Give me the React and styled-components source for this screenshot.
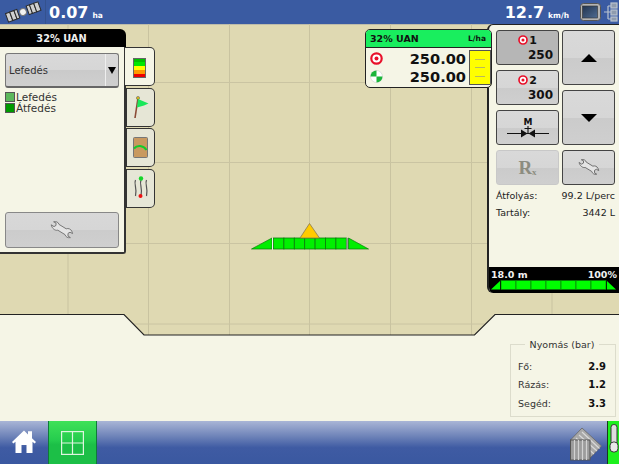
import React from "react";
import styled, { createGlobalStyle } from "styled-components";

const GlobalStyle = createGlobalStyle`
  html, body {
    margin: 0;
    padding: 0;
    overflow: hidden;
    background: #f5f5e6;
  }
  * {
    box-sizing: border-box;
  }
`;

const Screen = styled.div`
  width: 619px;
  height: 464px;
  display: flex;
  flex-direction: column;
  overflow: hidden;
  font-family: "DejaVu Sans", sans-serif;
  color: #222;
  background: #f5f5e6;
`;

const TopBar = styled.header`
  height: 24px;
  flex: none;
  display: flex;
  align-items: center;
  background: #3a5ba2;
  color: #fff;
`;

const GpsCell = styled.div`
  width: 46px;
  height: 24px;
  padding-left: 4px;
  display: flex;
  align-items: center;
  border-right: 1px solid #34528f;
`;

const Reading = styled.div`
  display: flex;
  align-items: baseline;
  gap: 4px;
  margin-left: ${(props) => props.$left || 0}px;
  margin-right: ${(props) => props.$right || 0}px;
  font-size: 16px;
  font-weight: 700;
  white-space: nowrap;
`;

const Unit = styled.span`
  font-size: 7.5px;
  font-weight: 700;
`;

const StatusIcons = styled.div`
  margin-left: auto;
  padding-right: 1px;
  display: flex;
  align-items: center;
  gap: 2px;
`;

const Main = styled.main`
  position: relative;
  flex: 1;
`;

const FieldMap = styled.svg`
  position: absolute;
  top: 0;
  left: 0;
  display: block;
`;

const LeftPanel = styled.section`
  position: absolute;
  top: 5px;
  left: 0;
  width: 155px;
`;

const PanelTitle = styled.div`
  width: 126px;
  height: 18px;
  padding-right: 3px;
  background: #000;
  border-radius: 0 6px 0 0;
  color: #f0f0f0;
  font-size: 9.8px;
  font-weight: 700;
  text-align: center;
  line-height: 19px;
`;

const PanelRow = styled.div`
  display: flex;
  align-items: flex-start;
`;

const PanelBody = styled.div`
  width: 126px;
  height: 207px;
  padding: 6px 6px 4px 5px;
  display: flex;
  flex-direction: column;
  background: #f5f5e6;
  border-right: 2px solid #333;
  border-bottom: 2px solid #333;
  border-radius: 0 0 3px 0;
`;

const Dropdown = styled.div`
  height: 35px;
  width: 114px;
  display: flex;
  align-items: center;
  background: linear-gradient(#d9d9d9 0%, #d6d6d6 50%, #cacaca 51%, #cfcfcf 100%);
  border: 1px solid #777;
  border-bottom: 2px solid #666;
  border-radius: 3px;
  font-size: 10px;
  color: #333;
`;

const DropdownLabel = styled.span`
  flex: 1;
  padding-left: 3px;
`;

const DropdownArrow = styled.span`
  width: 13px;
  height: 100%;
  display: flex;
  align-items: center;
  justify-content: center;
  border-left: 1px solid #eee;
  &::after {
    content: "";
    border-left: 4px solid transparent;
    border-right: 4px solid transparent;
    border-top: 7px solid #000;
  }
`;

const Legend = styled.div`
  margin-top: 4px;
  display: flex;
  flex-direction: column;
  gap: 1px;
`;

const LegendRow = styled.div`
  display: flex;
  align-items: center;
  gap: 1px;
  height: 10px;
  font-size: 10.5px;
  color: #333;
`;

const Swatch = styled.span`
  width: 10px;
  height: 10px;
  background: ${(props) => props.$color};
  border: 1px solid #555;
`;

const WrenchWide = styled.button`
  margin-top: auto;
  width: 114px;
  height: 36px;
  padding: 0;
  display: flex;
  align-items: center;
  justify-content: center;
  background: linear-gradient(#d8d8d8 0%, #d6d6d6 50%, #cccccc 51%, #cfcfcf 100%);
  border: 1px solid #888;
  border-radius: 3px;
`;

const TabColumn = styled.div`
  width: 30px;
  display: flex;
  flex-direction: column;
  gap: 1.5px;
  margin-left: -1px;
  position: relative;
`;

const Tab = styled.div`
  width: 30px;
  height: 39px;
  display: flex;
  align-items: center;
  justify-content: center;
  background: ${(props) => (props.$active ? "#f5f5e6" : "#e6e6d6")};
  border: 1px solid #333;
  border-left: ${(props) => (props.$active ? "none" : "2px solid #333")};
  border-radius: 0 5px 5px 0;
`;

const RatePanel = styled.section`
  position: absolute;
  top: 5px;
  left: 365px;
  width: 127px;
  height: 59px;
  display: flex;
  flex-direction: column;
  background: #f5f5e6;
  border: 1px solid #222;
  border-radius: 5px;
  overflow: hidden;
`;

const RateHeader = styled.div`
  height: 18px;
  flex: none;
  padding: 0 5px 0 4px;
  display: flex;
  align-items: center;
  justify-content: space-between;
  background: #19ee5e;
  border-bottom: 1px solid #222;
  font-size: 9.5px;
  font-weight: 700;
  color: #111;
`;

const RateSmall = styled.span`
  font-size: 7.5px;
`;

const RateBody = styled.div`
  flex: 1;
  display: flex;
`;

const RateValues = styled.div`
  width: 103px;
  padding: 2px 3px 0 4px;
  display: flex;
  flex-direction: column;
`;

const RateRow = styled.div`
  height: 17.5px;
  display: flex;
  align-items: center;
  justify-content: space-between;
  font-size: 14.6px;
  font-weight: 700;
  color: #111;
`;

const RateGauge = styled.div`
  width: 22px;
  margin-top: 2px;
  height: 35px;
  display: flex;
  flex-direction: column;
  align-items: center;
  justify-content: space-evenly;
  background: #ffff00;
  border: 1px solid #555;
  &::before,
  &::after {
    content: "";
    width: 10px;
    height: 1px;
    background: #b8b860;
  }
`;

const GaugeTick = styled.span`
  width: 10px;
  height: 1px;
  background: #b8b860;
`;

const RightPanel = styled.aside`
  position: absolute;
  top: 0;
  right: 0;
  width: 132px;
  height: 269px;
  display: flex;
  flex-direction: column;
  background: #f5f5e6;
  border-top: 1px solid #222;
  border-left: 2px solid #222;
  border-radius: 6px 0 0 6px;
  overflow: hidden;
`;

const ControlGrid = styled.div`
  margin: 5px 0 0 7px;
  display: grid;
  grid-template-columns: 63px 53px;
  grid-template-rows: repeat(4, 35px);
  column-gap: 3px;
  row-gap: 5px;
`;

const Control = styled.button`
  grid-column: ${(props) => props.$column};
  grid-row: ${(props) => props.$row};
  align-self: ${(props) => props.$align || "stretch"};
  height: ${(props) => (props.$tall ? "55px" : "auto")};
  padding: 0;
  display: flex;
  flex-direction: column;
  align-items: center;
  justify-content: center;
  font-family: inherit;
  background: ${(props) =>
    props.$pressed
      ? "#b6b6b6"
      : "linear-gradient(#d9d9d9 0%, #d6d6d6 50%, #cbcbcb 51%, #cfcfcf 100%)"};
  border: 1px solid ${(props) => (props.$disabled ? "#c8c8c8" : "#444")};
  border-radius: 3px;
  color: #111;
`;

const PresetTop = styled.span`
  display: flex;
  align-items: center;
  gap: 1px;
  margin-bottom: 1px;
  font-size: 11px;
  font-weight: 700;
`;

const PresetValue = styled.span`
  align-self: flex-end;
  padding-right: 5px;
  font-size: 12px;
  font-weight: 700;
  line-height: 14px;
`;

const RxMark = styled.span`
  display: flex;
  align-items: flex-end;
  font-family: "Liberation Serif", serif;
  font-size: 19px;
  font-weight: 700;
  line-height: 18px;
  color: #8c8c80;
`;

const RxSub = styled.span`
  font-size: 9px;
  line-height: 9px;
`;

const Arrow = styled.span`
  border-left: 8px solid transparent;
  border-right: 8px solid transparent;
  ${(props) =>
    props.$up ? "border-bottom: 8px solid #000;" : "border-top: 8px solid #000;"}
`;

const Stats = styled.div`
  margin-top: 4px;
  padding: 0 4px 0 7px;
  display: flex;
  flex-direction: column;
  gap: 5px;
`;

const StatRow = styled.div`
  height: 12px;
  display: flex;
  justify-content: space-between;
  align-items: center;
  font-size: 9.5px;
  color: #222;
`;

const BoomFooter = styled.div`
  margin-top: auto;
  height: 26px;
  padding-top: 2px;
  background: #000;
  color: #f2f2f2;
`;

const BoomText = styled.div`
  display: flex;
  justify-content: space-between;
  font-size: 9.5px;
  font-weight: 700;
  line-height: 11px;
  padding: 0 2px 0 2px;
`;

const MarkerSlot = styled.div`
  position: absolute;
  top: 199px;
  left: 251px;
`;

const PressureBox = styled.fieldset`
  position: absolute;
  top: 315px;
  left: 510px;
  width: 106px;
  height: 78px;
  margin: 0;
  padding: 7px 9px 0 7px;
  display: flex;
  flex-direction: column;
  border: 1px solid #dcdccc;
`;

const PressureTitle = styled.legend`
  margin: 0 auto;
  padding: 0 5px;
  font-size: 9.5px;
  color: #333;
`;

const PressureRow = styled.div`
  height: 18.5px;
  flex: none;
  display: flex;
  align-items: center;
  justify-content: space-between;
  font-size: 9.5px;
  color: #333;
`;

const PressureValue = styled.b`
  font-size: 10px;
  color: #111;
`;

const BottomBar = styled.footer`
  height: 43px;
  flex: none;
  display: flex;
  background: linear-gradient(#a9b5d6 0%, #6f84b9 35%, #3f5ba3 62%, #3a58a0 100%);
`;

const HomeButton = styled.div`
  width: 48px;
  display: flex;
  align-items: flex-start;
  justify-content: center;
  padding-top: 8px;
  padding-right: 1px;
`;

const MapButton = styled.div`
  width: 49px;
  display: flex;
  align-items: center;
  justify-content: center;
  background: linear-gradient(#3fe158 0%, #25cc4e 45%, #1cbf47 55%, #1cbf47 100%);
  border-left: 1px solid #0f7a3a;
  border-right: 1px solid #0f7a3a;
`;

const BottomRight = styled.div`
  margin-left: auto;
  display: flex;
  align-items: flex-end;
`;

const MachineButton = styled.div`
  width: 37px;
  height: 43px;
  display: flex;
  align-items: flex-start;
  padding: 6px 0 0 0;
`;

const LeverSlot = styled.div`
  width: 12px;
  height: 43px;
  padding-top: 3px;
  display: flex;
  justify-content: center;
  background: #1df01d;
  border-left: 1px solid #1b3a20;
`;

function Satellite() {
  return (
    <svg width="38" height="22" viewBox="0 0 38 22">
      <g transform="rotate(-20 19 11)" stroke="#2a2a2a" strokeWidth="1" fill="#cfcfcf">
        <rect x="2" y="6.5" width="4.5" height="9" />
        <rect x="6.5" y="6.5" width="4.5" height="9" />
        <rect x="11" y="6.5" width="3" height="9" />
        <circle cx="19" cy="11" r="3.4" fill="#f2f2f2" stroke="#777" />
        <rect x="24" y="6.5" width="3.5" height="9" />
        <rect x="27.5" y="6.5" width="4.5" height="9" />
        <rect x="32" y="6.5" width="4.5" height="9" />
      </g>
    </svg>
  );
}

function DisplayIcon() {
  return (
    <svg width="21" height="18" viewBox="0 0 21 18">
      <defs>
        <linearGradient id="lcd" x1="0" y1="0" x2="1" y2="1">
          <stop offset="0" stopColor="#22344f" />
          <stop offset="1" stopColor="#4f6b92" />
        </linearGradient>
      </defs>
      <rect x="0.5" y="0.5" width="20" height="17" rx="3" fill="#b4b4b4" stroke="#555" />
      <rect x="2.5" y="3" width="15" height="12" fill="url(#lcd)" stroke="#333" strokeWidth="0.6" />
    </svg>
  );
}

function NetworkIcon() {
  return (
    <svg width="15" height="20" viewBox="0 0 15 20" fill="none" stroke="#b9c3cf" strokeWidth="1.2">
      <path d="M1 10h4M5 4v13M5 4h3M5 10h3M5 17h3" />
      <rect x="8" y="1" width="6" height="5" fill="#8f9cae" />
      <rect x="8" y="8" width="6" height="5" fill="#8f9cae" />
      <rect x="8" y="15" width="6" height="4" fill="#8f9cae" />
    </svg>
  );
}

function Wrench({ width = 24, color = "#777" }) {
  return (
    <svg width={width} height={width * 0.75} viewBox="0 0 24 18">
      <path
        d="M1.2 3.8 4 5.6 6 4.4 6 2 3.6 0.8C6 0.2 8.4 1 9 3.4L16.2 7.8C18.4 7 20.8 8 21.8 10.2L22.6 12.6 20 11.2 18 12.4 18 15 20.4 16.6C17.8 17.2 15.6 15.8 15 13.6L7.8 9.2C5 10 2 7.4 1.2 3.8Z"
        fill="#e4e4e4"
        stroke={color}
        strokeWidth="1"
        strokeLinejoin="round"
      />
    </svg>
  );
}

function Target({ size = 13 }) {
  return (
    <svg width={size} height={size} viewBox="0 0 13 13">
      <circle cx="6.5" cy="6.5" r="5.2" fill="#fff" stroke="#e8102a" strokeWidth="2.2" />
      <circle cx="6.5" cy="6.5" r="2" fill="#e8102a" />
    </svg>
  );
}

function Coverage() {
  return (
    <svg width="13" height="13" viewBox="0 0 13 13">
      <circle cx="6.5" cy="6.5" r="6" fill="#fff" stroke="#cfcfcf" strokeWidth="0.6" />
      <path d="M6.5 6.5V0.5A6 6 0 0 0 0.5 6.5Z" fill="#1bb53a" />
      <path d="M6.5 6.5V12.5A6 6 0 0 0 12.5 6.5Z" fill="#1bb53a" />
    </svg>
  );
}

function ColorBars() {
  const colors = ["#00c000", "#00e800", "#ffff00", "#ff9900", "#ee0000"];
  return (
    <svg width="13" height="20" viewBox="0 0 13 20" style={{ marginTop: 3 }}>
      {colors.map((color, index) => (
        <rect key={color} x="0" y={index * 4} width="13" height="4" fill={color} />
      ))}
      <rect x="0.5" y="0.5" width="12" height="19" fill="none" stroke="#666" />
    </svg>
  );
}

function FlagIcon() {
  return (
    <svg width="18" height="24" viewBox="0 0 18 24">
      <path d="M3 23 6 3" stroke="#8a4a35" strokeWidth="1.6" />
      <circle cx="6" cy="3" r="1.6" fill="#d8b820" stroke="#555" strokeWidth="0.5" />
      <path d="M6 4 16.5 8.5 12 10.5 5 12.5Z" fill="#19e85a" />
    </svg>
  );
}

function FieldIcon() {
  return (
    <svg width="16" height="22" viewBox="0 0 16 22">
      <rect x="0.5" y="0.5" width="14" height="20" rx="1" fill="#c9995f" stroke="#777" />
      <path d="M1 11.5C4 8 10 8 13.5 13" fill="none" stroke="#12cc2a" strokeWidth="2" />
    </svg>
  );
}

function TracksIcon() {
  return (
    <svg width="16" height="26" viewBox="0 0 16 26" fill="none" stroke="#555" strokeWidth="1.2">
      <path d="M2.5 5C0.5 9 4.5 13 2.5 21" />
      <path d="M8 5C6 9 10 13 8 21" />
      <path d="M13.5 5C11.5 9 15.5 13 13.5 21" />
      <circle cx="8" cy="3.5" r="2.2" fill="#15d62a" stroke="none" />
      <circle cx="7.5" cy="21" r="2" fill="#ee1111" stroke="none" />
    </svg>
  );
}

function ManualIcon() {
  return (
    <svg width="44" height="24" viewBox="0 0 44 24">
      <text x="22" y="9" fontSize="9" fontWeight="700" textAnchor="middle" fontFamily="DejaVu Sans" fill="#111">M</text>
      <path d="M1 17.5H43M22 10V17" stroke="#111" strokeWidth="1.1" fill="none" />
      <path d="M15 13.5 21.5 17.5 15 21.5ZM29 13.5 22.5 17.5 29 21.5Z" fill="#111" />
      <path d="M18.5 12.5H25.5" stroke="#111" strokeWidth="1" />
    </svg>
  );
}

function BoomStrip() {
  const sections = [0, 1, 2, 3, 4, 5, 6];
  return (
    <svg width="130" height="10" viewBox="0 0 130 10" style={{ display: "block" }}>
      <path d="M2 9.5 11 1V9.5Z" fill="#00ff00" />
      {sections.map((section) => (
        <rect
          key={section}
          x={12 + section * 15}
          y="0.5"
          width="15"
          height="9"
          fill="#00ff00"
          stroke="#0a7a0a"
          strokeWidth="0.7"
        />
      ))}
      <path d="M118 1 127 9.5H118Z" fill="#00ff00" />
    </svg>
  );
}

function MachineGlyph() {
  const sections = [0, 1, 2, 3, 4, 5, 6];
  return (
    <svg width="118" height="27" viewBox="0 0 118 27" style={{ display: "block" }}>
      <path d="M0.5 26 21 15V26Z" fill="#00ee00" stroke="#0a7a0a" strokeWidth="0.7" />
      <rect x="21" y="15" width="1.6" height="11.5" fill="#eee" />
      {sections.map((section) => (
        <rect
          key={section}
          x={22.5 + section * 10.4}
          y="15"
          width="10.4"
          height="11"
          fill="#00f000"
          stroke="#0a7a0a"
          strokeWidth="0.8"
        />
      ))}
      <rect x="95.5" y="15" width="1.8" height="11.5" fill="#999" />
      <path d="M117.5 26 97.5 15V26Z" fill="#00ee00" stroke="#0a7a0a" strokeWidth="0.7" />
      <path d="M58.5 0.5 68.5 15H49Z" fill="#ffcb00" stroke="#8a7a50" strokeWidth="0.8" />
    </svg>
  );
}

function HomeIcon() {
  return (
    <svg width="26" height="25" viewBox="0 0 26 25">
      <path
        d="M1 13 13 1.5 17 5.4V2.2H21V9.2L25 13 23.6 14.6 21.5 12.8V24H15.5V16H10.5V24H4.5V12.8L2.4 14.6Z"
        fill="#fff"
      />
    </svg>
  );
}

function GridIcon() {
  return (
    <svg width="23" height="24" viewBox="0 0 23 24" fill="none" stroke="#dff5e0" strokeWidth="1.2">
      <rect x="0.6" y="0.6" width="21.8" height="22.8" />
      <path d="M11.5 0.6V23.4M0.6 12H22.4" />
    </svg>
  );
}

function TankIcon() {
  return (
    <svg width="33" height="34" viewBox="0 0 33 34">
      <path d="M0.5 13 12 1 31.5 19 20 31Z" fill="#a8a8a8" stroke="#666" strokeWidth="0.8" />
      <path d="M9 8 27 24M12 5 29.5 21.5M6 11 24 27" stroke="#dadada" strokeWidth="1.1" fill="none" />
      <rect x="0.5" y="13" width="19.5" height="20" fill="#9c9c9c" stroke="#555" />
      <path d="M4.5 13V33M8.5 13V33M12.5 13V33M16.5 13V33" stroke="#d2d2d2" strokeWidth="1.2" />
    </svg>
  );
}

function Lever() {
  return (
    <svg width="10" height="30" viewBox="0 0 10 30">
      <rect x="2" y="0.5" width="6" height="20" rx="2.8" fill="#ddd" stroke="#333" />
      <rect x="1" y="18" width="8" height="10" rx="3.5" fill="#e8e8e8" stroke="#333" />
    </svg>
  );
}

export default function App() {
  const gridX = [68, 148.5, 229.5, 309.5, 390.5, 471.5, 552];
  const gridY = [58.5, 138.5, 219.5, 300];

  return (
    <>
      <GlobalStyle />
      <Screen>
        <TopBar>
          <GpsCell>
            <Satellite />
          </GpsCell>
          <Reading $left={3}>
            0.07 <Unit>ha</Unit>
          </Reading>
          <StatusIcons>
            <Reading $right={9}>
              12.7 <Unit>km/h</Unit>
            </Reading>
            <DisplayIcon />
            <NetworkIcon />
          </StatusIcons>
        </TopBar>

        <Main>
          <FieldMap width="619" height="397" viewBox="0 0 619 397">
            <rect width="619" height="397" fill="#dfd9b2" />
            <path d="M0 0.5H619" stroke="#bdbcaa" />
            {gridX.map((x) => (
              <path key={x} d={`M${x} 0V311`} stroke="#c9c3a0" />
            ))}
            {gridY.map((y) => (
              <path key={y} d={`M0 ${y}H619`} stroke="#cac4a2" />
            ))}
            <path
              d="M0 290.5H124L144 311H474.5L495 290.5H619V397H0Z"
              fill="#f5f5e6"
            />
            <path
              d="M0 290.5H124L144 311H474.5L495 290.5H619"
              fill="none"
              stroke="#222"
              strokeWidth="1.2"
            />
          </FieldMap>

          <LeftPanel>
            <PanelTitle>32% UAN</PanelTitle>
            <PanelRow>
              <PanelBody>
                <Dropdown>
                  <DropdownLabel>Lefedés</DropdownLabel>
                  <DropdownArrow />
                </Dropdown>
                <Legend>
                  <LegendRow>
                    <Swatch $color="#5cb85c" />
                    Lefedés
                  </LegendRow>
                  <LegendRow>
                    <Swatch $color="#009900" />
                    Átfedés
                  </LegendRow>
                </Legend>
                <WrenchWide>
                  <Wrench />
                </WrenchWide>
              </PanelBody>
              <TabColumn>
                <Tab $active>
                  <ColorBars />
                </Tab>
                <Tab>
                  <FlagIcon />
                </Tab>
                <Tab>
                  <FieldIcon />
                </Tab>
                <Tab>
                  <TracksIcon />
                </Tab>
              </TabColumn>
            </PanelRow>
          </LeftPanel>

          <RightPanel>
            <ControlGrid>
              <Control $column={1} $row={1} $pressed>
                <PresetTop>
                  <Target size={10} />1
                </PresetTop>
                <PresetValue>250</PresetValue>
              </Control>
              <Control $column={1} $row={2}>
                <PresetTop>
                  <Target size={10} />2
                </PresetTop>
                <PresetValue>300</PresetValue>
              </Control>
              <Control $column={1} $row={3}>
                <ManualIcon />
              </Control>
              <Control $column={1} $row={4} $disabled>
                <RxMark>
                  R<RxSub>x</RxSub>
                </RxMark>
              </Control>
              <Control $column={2} $row="1 / span 2" $tall $align="start">
                <Arrow $up />
              </Control>
              <Control $column={2} $row="2 / span 2" $tall $align="end">
                <Arrow />
              </Control>
              <Control $column={2} $row={4}>
                <Wrench width={22} color="#666" />
              </Control>
            </ControlGrid>
            <Stats>
              <StatRow>
                <span>Átfolyás:</span>
                <span>99.2 L/perc</span>
              </StatRow>
              <StatRow>
                <span>Tartály:</span>
                <span>3442 L</span>
              </StatRow>
            </Stats>
            <BoomFooter>
              <BoomText>
                <span>18.0 m</span>
                <span>100%</span>
              </BoomText>
              <BoomStrip />
            </BoomFooter>
          </RightPanel>

          <RatePanel>
            <RateHeader>
              <span>32% UAN</span>
              <RateSmall>L/ha</RateSmall>
            </RateHeader>
            <RateBody>
              <RateValues>
                <RateRow>
                  <Target />
                  250.00
                </RateRow>
                <RateRow>
                  <Coverage />
                  250.00
                </RateRow>
              </RateValues>
              <RateGauge>
                <GaugeTick />
              </RateGauge>
            </RateBody>
          </RatePanel>

          <MarkerSlot>
            <MachineGlyph />
          </MarkerSlot>

          <PressureBox>
            <PressureTitle>Nyomás (bar)</PressureTitle>
            <PressureRow>
              <span>Fő:</span>
              <PressureValue>2.9</PressureValue>
            </PressureRow>
            <PressureRow>
              <span>Rázás:</span>
              <PressureValue>1.2</PressureValue>
            </PressureRow>
            <PressureRow>
              <span>Segéd:</span>
              <PressureValue>3.3</PressureValue>
            </PressureRow>
          </PressureBox>
        </Main>

        <BottomBar>
          <HomeButton>
            <HomeIcon />
          </HomeButton>
          <MapButton>
            <GridIcon />
          </MapButton>
          <BottomRight>
            <MachineButton>
              <TankIcon />
            </MachineButton>
            <LeverSlot>
              <Lever />
            </LeverSlot>
          </BottomRight>
        </BottomBar>
      </Screen>
    </>
  );
}
